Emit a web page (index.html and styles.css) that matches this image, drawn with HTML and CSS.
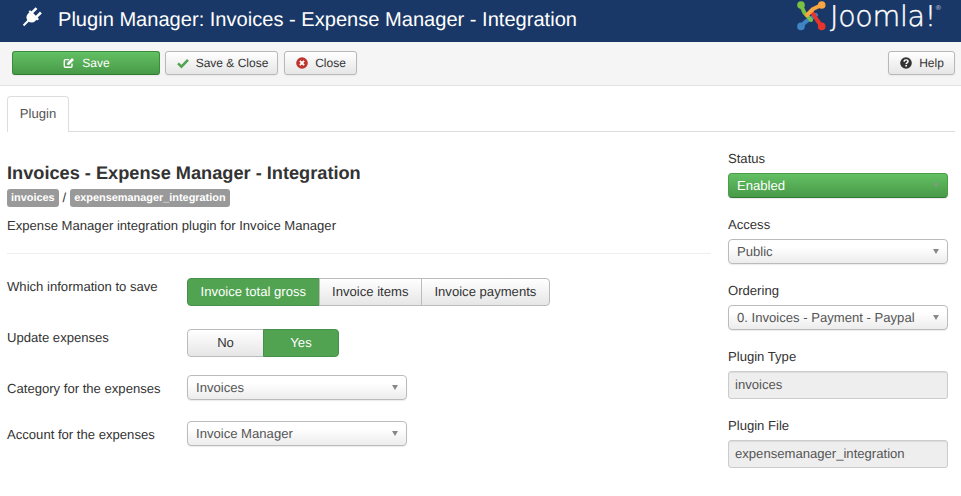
FILE: index.html
```html
<!DOCTYPE html>
<html lang="en">
<head>
<meta charset="utf-8">
<title>Plugin Manager</title>
<link rel="stylesheet" href="styles.css">
</head>
<body>
<header class="topbar">
  <svg class="plug" viewBox="0 0 20 20" aria-hidden="true"><g transform="rotate(45 10 10)"><rect x="5.6" y="0.5" width="2.6" height="6.5"/><rect x="11.8" y="0.5" width="2.6" height="6.5"/><rect x="3.6" y="6.4" width="12.8" height="2.4" rx="1"/><path d="M4.8 8.5 h10.4 v2 a5.2 5.2 0 0 1 -10.4 0z"/><rect x="9" y="14" width="2" height="8"/></g></svg>
  <h1 class="page-title">Plugin Manager: Invoices - Expense Manager - Integration</h1>
  <div class="brand">
    <svg class="brand-mark" viewBox="0 0 29 30" aria-hidden="true">
      <g fill="none" stroke-width="4" stroke-linecap="round" stroke-linejoin="round">
        <path d="M4 25 L9 20.5 L19 14" stroke="#3f84c5"/>
        <path d="M4 4 L7.5 12 L14 19" stroke="#7ac143"/>
        <path d="M24.5 25 L20 19 L15 11" stroke="#e8352b"/>
        <path d="M24.5 4 L16 8 L10 14" stroke="#f9a541"/>
      </g>
      <circle cx="4" cy="4" r="3.8" fill="#7ac143"/>
      <circle cx="24.7" cy="4" r="3.8" fill="#f9a541"/>
      <circle cx="24.7" cy="25.4" r="3.8" fill="#e8352b"/>
      <circle cx="4" cy="25.4" r="3.8" fill="#3f84c5"/>
    </svg>
    <span class="brand-name">Joomla!</span><span class="brand-reg">®</span>
  </div>
</header>

<nav class="toolbar">
  <button class="btn btn-save" type="button">
    <svg class="ico" viewBox="0 0 14 14" aria-hidden="true"><path d="M10.5 7.5v3.2c0 .7-.6 1.3-1.3 1.3H2.8c-.7 0-1.3-.6-1.3-1.3V4.3C1.5 3.6 2.1 3 2.8 3h4.4" fill="none" stroke="#fff" stroke-width="1.6"/><path d="M5 6.8 L10.6 1.2 L12.8 3.4 L7.2 9 L5 9.2 Z" fill="#fff"/></svg>
    Save
  </button>
  <button class="btn btn-saveclose" type="button">
    <svg class="ico" viewBox="0 0 14 14" aria-hidden="true"><path d="M1.2 7.4 L5.2 11.2 L12.8 3.4" fill="none" stroke="#51a351" stroke-width="3"/></svg>
    Save &amp; Close
  </button>
  <button class="btn btn-close" type="button">
    <svg class="ico" viewBox="0 0 14 14" aria-hidden="true"><circle cx="7" cy="7" r="6.8" fill="#bd362f"/><path d="M4.6 4.6 L9.4 9.4 M9.4 4.6 L4.6 9.4" stroke="#fff" stroke-width="2.2"/></svg>
    Close
  </button>
  <button class="btn btn-help" type="button">
    <svg class="ico" viewBox="0 0 14 14" aria-hidden="true"><circle cx="7" cy="7" r="6.8" fill="#333"/><path d="M4.8 5.4 C4.8 2.6 9.4 2.8 9.4 5.2 C9.4 6.8 7.2 6.8 7.2 8.2" fill="none" stroke="#fff" stroke-width="1.7"/><rect x="6.2" y="9.2" width="2" height="1.9" fill="#fff"/></svg>
    Help
  </button>
</nav>

<main class="content">
  <div class="tabs"><a class="tab" href="#">Plugin</a></div>
  <div class="columns">
    <section class="col-main">
      <h2 class="plugin-title">Invoices - Expense Manager - Integration</h2>
      <p class="crumbs"><span class="badge">invoices</span><span>/</span><span class="badge">expensemanager_integration</span></p>
      <p class="desc">Expense Manager integration plugin for Invoice Manager</p>
      <hr class="rule">
      <div class="row row-a">
        <span class="row-label">Which information to save</span>
        <div class="seg">
          <span class="seg-item seg-on">Invoice total gross</span>
          <span class="seg-item">Invoice items</span>
          <span class="seg-item">Invoice payments</span>
        </div>
      </div>
      <div class="row row-b">
        <span class="row-label">Update expenses</span>
        <div class="seg">
          <span class="seg-item seg-no">No</span>
          <span class="seg-item seg-on seg-yes">Yes</span>
        </div>
      </div>
      <div class="row row-c">
        <span class="row-label">Category for the expenses</span>
        <div class="select select-form">Invoices<i class="caret"></i></div>
      </div>
      <div class="row row-d">
        <span class="row-label">Account for the expenses</span>
        <div class="select select-form">Invoice Manager<i class="caret"></i></div>
      </div>
    </section>
    <aside class="col-side">
      <div class="field"><label class="field-label">Status</label><div class="select select-green">Enabled<i class="caret"></i></div></div>
      <div class="field"><label class="field-label">Access</label><div class="select">Public<i class="caret"></i></div></div>
      <div class="field"><label class="field-label">Ordering</label><div class="select">0. Invoices - Payment - Paypal<i class="caret"></i></div></div>
      <div class="field field-ro"><label class="field-label">Plugin Type</label><div class="readonly">invoices</div></div>
      <div class="field field-ro"><label class="field-label">Plugin File</label><div class="readonly">expensemanager_integration</div></div>
    </aside>
  </div>
</main>
</body>
</html>
```
FILE: styles.css
```css
* { box-sizing: border-box; }
html, body { margin: 0; padding: 0; }
body {
  width: 961px;
  height: 496px;
  overflow: hidden;
  background: #fff;
  color: #333;
  font: 13.1px/18px "Liberation Sans", Arial, sans-serif;
  text-rendering: geometricPrecision;
}

.topbar {
  height: 42px;
  background: #1a3867;
  display: flex;
  align-items: flex-start;
  padding-left: 22px;
  color: #fff;
}
.plug { width: 20px; height: 20px; margin-top: 7px; fill: #fff; flex: none; }
.page-title {
  margin: 7px 0 0 16px;
  font-size: 20.08px;
  line-height: 26px;
  font-weight: 400;
  white-space: nowrap;
}
.brand {
  margin-left: auto;
  margin-right: 20px;
  display: flex;
  align-items: flex-start;
  color: #fff;
}
.brand-mark { width: 29px; height: 30px; margin-top: 1px; margin-right: 4px; }
.brand-name {
  font: 200 28.5px/32px "DejaVu Sans", sans-serif;
  letter-spacing: -0.3px;
  -webkit-text-stroke: 0.4px #fff;
  margin-top: 1px;
}
.brand-reg { font-size: 7px; line-height: 9px; margin-top: 4px; color: #cfd6e0; }

.toolbar {
  height: 44px;
  background: #f5f5f5;
  border-bottom: 1px solid #e2e2e2;
  display: flex;
  align-items: flex-start;
  gap: 5px;
  padding: 9px 6px 0 12px;
}
.btn {
  height: 24px;
  padding: 0 0 0 1px;
  display: inline-flex;
  align-items: center;
  justify-content: center;
  gap: 7px;
  font: 12px/18px "Liberation Sans", Arial, sans-serif;
  text-rendering: geometricPrecision;
  color: #333;
  background: linear-gradient(#fff, #e6e6e6);
  border: 1px solid #b8b8b8;
  border-radius: 3px;
  box-shadow: 0 1px 2px rgba(0,0,0,.05);
  white-space: nowrap;
}
.ico { width: 12px; height: 12px; flex: none; }
.btn-save {
  width: 148px;
  color: #fff;
  background: linear-gradient(#63c063, #489a48);
  border-color: #3c8a3c #3c8a3c #2f7a2f;
}
.btn-saveclose { width: 113px; padding-left: 2px; }
.btn-close { width: 73px; margin-left: 1px; }
.btn-help { width: 67px; margin-left: auto; }

.content { padding: 10px 6px 0 7px; }
.tabs {
  height: 36px;
  border-bottom: 1px solid #ddd;
  display: flex;
}
.tab {
  width: 62px;
  height: 36px;
  display: flex;
  align-items: center;
  justify-content: center;
  color: #555;
  text-decoration: none;
  background: #fff;
  border: 1px solid #ddd;
  border-bottom: 0;
  border-radius: 4px 4px 0 0;
  padding-bottom: 1px;
}

.columns { display: flex; }
.col-main { width: 704px; padding-top: 30px; }
.col-side { width: 220px; margin-left: 17px; padding-top: 18px; }

.plugin-title {
  margin: 0;
  font-size: 18.2px;
  line-height: 22px;
  font-weight: 700;
  color: #333;
}
.crumbs { margin: 5px 0 0; height: 18px; display: flex; align-items: center; gap: 4px; }
.badge {
  display: inline-block;
  height: 18px;
  padding: 0 4px;
  background: #999;
  color: #fff;
  font-size: 10.9px;
  font-weight: 700;
  line-height: 18px;
  border-radius: 3px;
}
.desc { margin: 10px 0 0; line-height: 18px; }
.rule { margin: 18px 0 0; border: 0; border-top: 1px solid #eee; height: 1px; }

.row { display: flex; align-items: flex-start; }
.row-label { width: 180px; flex: none; line-height: 18px; }
.row-a { margin-top: 24px; }
.row-b { margin-top: 23px; }
.row-c { margin-top: 18px; }
.row-d { margin-top: 21px; }
.row-c .row-label, .row-d .row-label { margin-top: 5px; }

.seg { display: flex; height: 28px; }
.seg-item {
  height: 28px;
  padding: 0 12.5px;
  display: flex;
  align-items: center;
  justify-content: center;
  background: linear-gradient(#fff, #e6e6e6);
  border: 1px solid #bbb;
  margin-left: -1px;
  color: #333;
  white-space: nowrap;
}
.seg-item:first-child { margin-left: 0; border-radius: 4px 0 0 4px; }
.seg-item:last-child { border-radius: 0 4px 4px 0; }
.seg-on {
  background: #51a351;
  border-color: #46914a;
  color: #fff;
}
.seg-no { width: 77px; }
.seg-yes { width: 76px; }

.select {
  position: relative;
  height: 25px;
  padding: 0 8px;
  display: flex;
  align-items: center;
  color: #555;
  background: linear-gradient(#fff 0%, #fff 30%, #ececec 100%);
  border: 1px solid #bbb;
  border-radius: 4px;
  box-shadow: 0 1px 1px rgba(0,0,0,.08);
  white-space: nowrap;
}
.select-form { width: 220px; }
.caret {
  position: absolute;
  right: 8px;
  top: 9px;
  width: 0;
  height: 0;
  border-left: 3.5px solid transparent;
  border-right: 3.5px solid transparent;
  border-top: 5px solid #888;
}
.select-green {
  color: #fff;
  background: linear-gradient(#63c063, #489a48);
  border-color: #4a9e4a #4a9e4a #2f7a2f;
}
.select-green .caret { border-top-color: #7a9f7a; }

.field-label { display: block; line-height: 18px; margin-bottom: 5px; }
.field { margin-bottom: 18px; }
.readonly {
  height: 28px;
  padding: 0 6px;
  display: flex;
  align-items: center;
  color: #555;
  background: #eee;
  border: 1px solid #ccc;
  border-radius: 3px;
  box-shadow: inset 0 1px 1px rgba(0,0,0,.08);
}
```
